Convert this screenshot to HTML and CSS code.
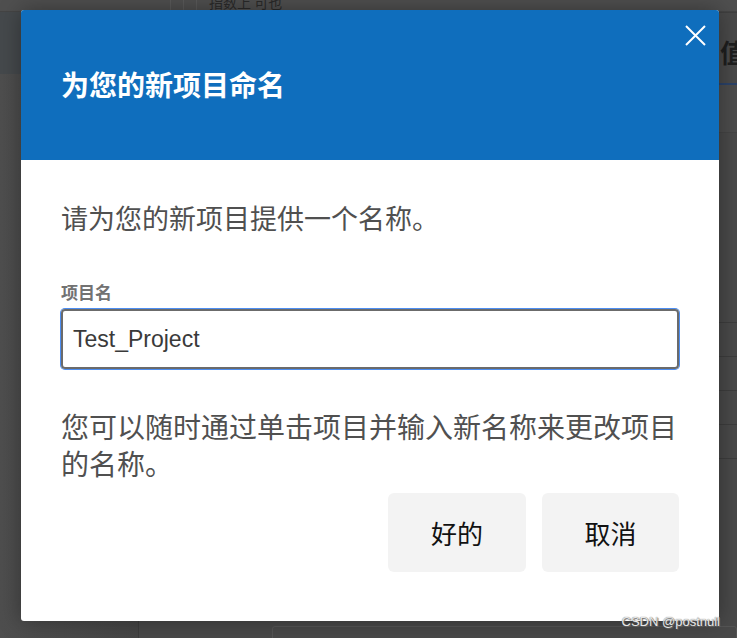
FILE: index.html
```html
<!DOCTYPE html>
<html lang="zh-CN">
<head>
<meta charset="utf-8">
<title>为您的新项目命名</title>
<link rel="stylesheet" href="styles.css">
</head>
<body>
<div class="app">
  <div class="app-top">
    <div class="app-top-left"></div>
    <div class="app-top-tools">
      <span class="tool-sep"></span><span class="tool-sep"></span><span class="tool-sep"></span>
      <span class="tool-text">指数上 可也</span>
    </div>
  </div>
  <div class="app-main">
    <div class="app-side">
      <div class="side-band"></div>
    </div>
    <div class="app-content">
      <div class="content-head"><span class="head-cell">值</span></div>
      <div class="content-sub"></div>
      <div class="content-rows">
        <div class="row r1"></div>
        <div class="row r2"></div>
        <div class="row r3"></div>
        <div class="row r4"></div>
        <div class="row r5"></div>
      </div>
      <div class="content-foot"><div class="foot-box"></div></div>
    </div>
  </div>
</div>

<div class="overlay">
  <div class="dialog" role="dialog" aria-labelledby="dlg-title">
    <div class="dialog-header">
      <h1 id="dlg-title" class="dialog-title">为您的新项目命名</h1>
      <button class="close-btn" aria-label="关闭">
        <svg width="21" height="21" viewBox="0 0 21 21"><path d="M1 1 L20 20 M20 1 L1 20" stroke="#fff" stroke-width="2" fill="none"/></svg>
      </button>
    </div>
    <div class="dialog-body">
      <p class="lead">请为您的新项目提供一个名称。</p>
      <label class="field-label" for="proj">项目名</label>
      <div class="field"><span class="field-value">Test_Project</span></div>
      <p class="hint">您可以随时通过单击项目并输入新名称来更改项目的名称。</p>
      <div class="actions">
        <button class="btn">好的</button>
        <button class="btn">取消</button>
      </div>
    </div>
  </div>
  <div class="watermark">CSDN @postnull</div>
</div>
</body>
</html>
```
FILE: styles.css
```css
* { box-sizing: border-box; }
html, body { margin: 0; padding: 0; }
body {
  width: 737px;
  height: 638px;
  overflow: hidden;
  background: #4a4a4a;
  font-family: "Noto Sans CJK SC", "Noto Sans", sans-serif;
  position: relative;
}

/* dimmed application behind the dialog */
.app {
  height: 638px;
  display: flex;
  flex-direction: column;
  background: #494949;
}
.app-top {
  height: 12px;
  display: flex;
  background: #4f4f4f;
  border-bottom: 1px solid #444;
}
.app-top-left { width: 170px; }
.app-top-tools { display: flex; align-items: center; gap: 12px; }
.tool-sep { width: 1px; height: 12px; background: #5a5a5a; }
.tool-text { font-size: 14px; color: #2a2a2a; line-height: 12px; margin-top: -8px; }
.app-main { flex: 1; display: flex; }
.app-side {
  width: 139px;
  border-right: 1px solid #3c3c3c;
  background: linear-gradient(90deg, #4e4e4e 0%, #454545 100%);
}
.side-band { height: 62px; background: #45494c; }
.app-content { flex: 1; display: flex; flex-direction: column; }
.content-head {
  height: 73px;
  display: flex;
  justify-content: flex-end;
  align-items: center;
  border-top: 1px solid #3f3f3f;
  border-bottom: 2px solid #2b4268;
  padding-top: 6px;
}
.head-cell { font-size: 26px; font-weight: 700; color: #1e1e1e; margin-right: -9px; }
.content-sub { height: 48px; background: #4c4c4c; border-bottom: 1px solid #444; }
.content-rows { flex: 1; display: flex; flex-direction: column; padding-top: 156px; }
.row { height: 34px; border-bottom: 1px solid #3d3d3d; }
.content-foot { height: 24px; padding-left: 133px; }
.foot-box { height: 20px; border: 1px solid #555; border-radius: 3px; margin-top: 12px; }

/* overlay + dialog */
.overlay {
  position: absolute;
  inset: 0;
  padding: 10px 0 0 21px;
}
.dialog {
  position: relative;
  width: 698px;
  height: 611px;
  background: #fff;
  border-radius: 3px;
  overflow: hidden;
  box-shadow: 0 0 22px rgba(0, 0, 0, 0.35);
}
.dialog-header {
  height: 150px;
  background: #0f6ebd;
  display: flex;
  align-items: center;
  padding: 0 40px;
}
.dialog-title {
  margin: 0;
  font-size: 28px;
  font-weight: 700;
  line-height: 36px;
  color: #fff;
  padding-bottom: 2px;
}
.close-btn {
  position: absolute;
  top: 15px;
  right: 13px;
  width: 21px;
  height: 21px;
  padding: 0;
  border: 0;
  background: transparent;
  display: block;
}
.close-btn svg { display: block; }

.dialog-body {
  padding: 40px 40px 49px;
  display: flex;
  flex-direction: column;
}
.lead {
  margin: 0;
  font-size: 27px;
  line-height: 36px;
  color: #505050;
}
.field-label {
  margin-top: 45px;
  font-size: 17px;
  line-height: 22px;
  font-weight: 700;
  color: #727272;
}
.field {
  margin-top: 6px;
  height: 60px;
  border: 2px solid #6b6b6b;
  border-radius: 4px;
  box-shadow: 0 0 0 1px #4d8ef2;
  display: flex;
  align-items: center;
  padding: 0 10px;
}
.field-value {
  font-family: "Liberation Sans", Arial, sans-serif;
  font-size: 23px;
  color: #3a3a3a;
}
.hint {
  margin: 39px 0 0;
  font-size: 28px;
  line-height: 37px;
  color: #505050;
}
.actions {
  margin-top: 11px;
  display: flex;
  justify-content: flex-end;
  gap: 16px;
}
.btn {
  width: 138px;
  height: 79px;
  border: 0;
  border-radius: 6px;
  background: #f3f3f3;
  font-family: "Noto Sans CJK SC", sans-serif;
  font-size: 26px;
  color: #111;
  padding: 0;
}
.btn + .btn { width: 137px; }

.watermark {
  position: absolute;
  right: 17px;
  bottom: 9px;
  font-family: "Liberation Sans", Arial, sans-serif;
  font-size: 13px;
  color: #e8e8e8;
  text-shadow: 0 0 1px #555, 1px 1px 1px #666;
}
```
